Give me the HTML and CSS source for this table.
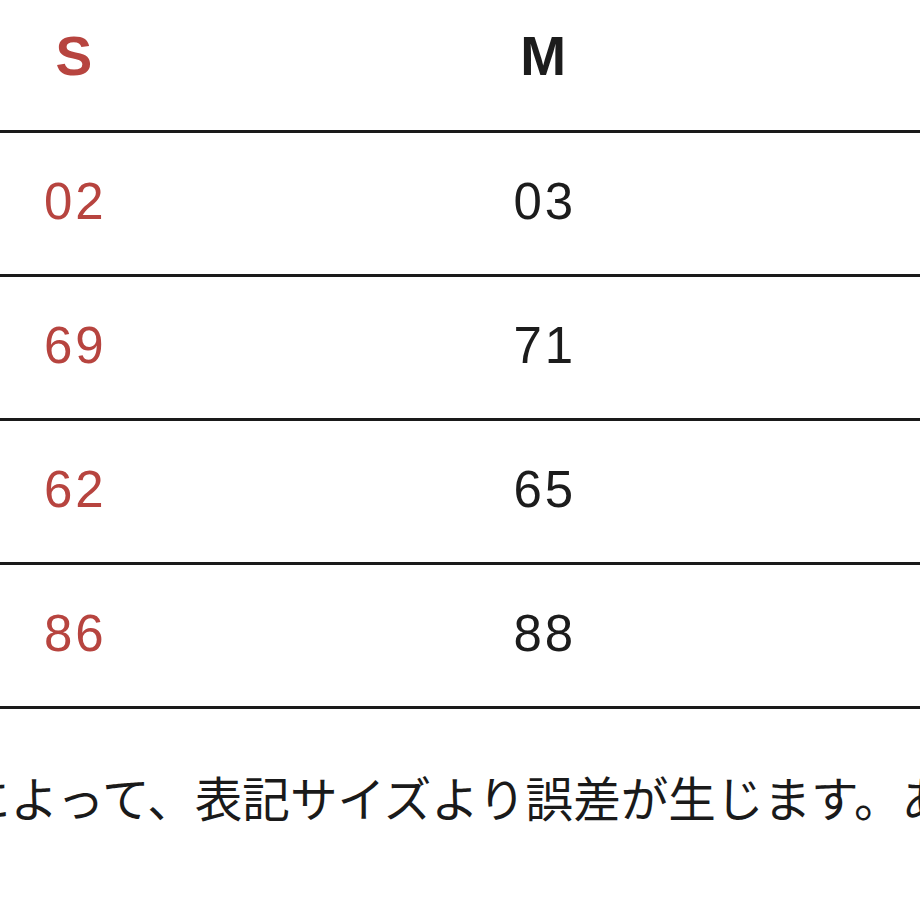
FILE: index.html
```html
<!DOCTYPE html>
<html lang="ja">
<head>
<meta charset="utf-8">
<title>サイズ表</title>
<link rel="stylesheet" href="styles.css">
</head>
<body>
<div class="page">
  <div class="table">
    <div class="row head">
      <div class="cell red">S</div>
      <div class="cell">M</div>
    </div>
    <div class="row">
      <div class="cell red">02</div>
      <div class="cell">03</div>
    </div>
    <div class="row">
      <div class="cell red">69</div>
      <div class="cell">71</div>
    </div>
    <div class="row">
      <div class="cell red">62</div>
      <div class="cell">65</div>
    </div>
    <div class="row">
      <div class="cell red">86</div>
      <div class="cell">88</div>
    </div>
  </div>
  <p class="note">によって、表記サイズより誤差が生じます。あ</p>
</div>
</body>
</html>
```

FILE: styles.css
```css
html, body {
  margin: 0;
  padding: 0;
  background: #ffffff;
  overflow: hidden;
}

.page {
  width: 920px;
  height: 920px;
  overflow: hidden;
}

.table {
  margin-left: -161px;
  width: 1081px;
  font-family: "Liberation Sans", Arial, sans-serif;
  color: #1c1c1c;
}

.row {
  display: grid;
  grid-template-columns: 469.5px 469.5px 1fr;
  align-items: center;
  height: 141px;
  border-bottom: 3px solid #1a1a1a;
  font-size: 51px;
  letter-spacing: 3px;
}

.row.head {
  height: 113px;
  padding-bottom: 17px;
  font-size: 55px;
  font-weight: bold;
  letter-spacing: 0;
}

.cell {
  text-align: center;
  line-height: 1;
  padding-left: 3px;
  padding-bottom: 4px;
}

.head .cell {
  padding-left: 0;
  padding-bottom: 0;
}

.red {
  color: #b7443f;
}

.note {
  margin: 64px 0 0 -37px;
  font-family: "Noto Sans CJK JP", "Noto Sans", sans-serif;
  font-size: 47.6px;
  line-height: 1;
  white-space: nowrap;
  color: #1a1a1a;
}
```
